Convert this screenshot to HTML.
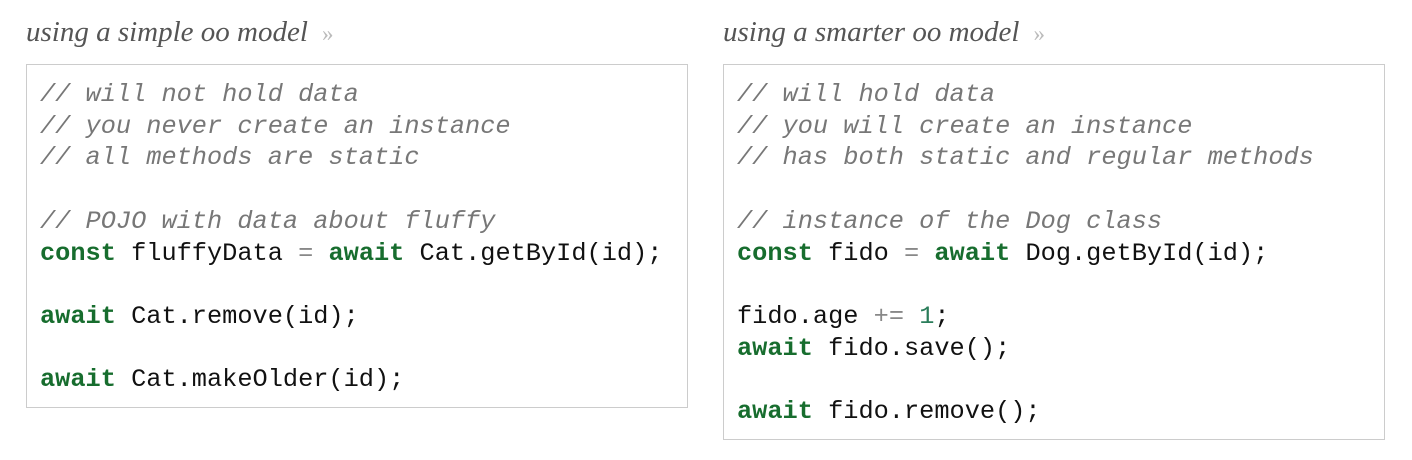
<!DOCTYPE html>
<html><head><style>
body{margin:0;background:#fff;width:1412px;height:460px;position:relative;overflow:hidden}
.t{position:absolute;top:16px;font-family:"Liberation Serif",serif;font-style:italic;font-size:29px;color:#555;white-space:nowrap}
.t span{color:#bbb;font-style:normal;font-size:23px;margin-left:14px}
.b{position:absolute;top:64px;width:662px;border:1px solid #ccc;box-sizing:border-box;padding:14px 0 0 13px;font-family:"Liberation Mono",monospace;font-size:25.3px;line-height:31.7px;color:#111;white-space:pre}
.c{color:#777;font-style:italic}
.k{color:#176d2e;font-weight:bold}
.n{color:#2a7d5a}.o{color:#888}
</style></head><body>
<div class="t" style="left:26px">using a simple oo model<span>»</span></div>
<div class="t" style="left:723px">using a smarter oo model<span>»</span></div>
<div class="b" style="left:26px;height:344px"><span class="c">// will not hold data
// you never create an instance
// all methods are static</span>

<span class="c">// POJO with data about fluffy</span>
<span class="k">const</span> fluffyData <span class="o">=</span> <span class="k">await</span> Cat.getById(id);

<span class="k">await</span> Cat.remove(id);

<span class="k">await</span> Cat.makeOlder(id);</div>
<div class="b" style="left:723px;height:376px"><span class="c">// will hold data
// you will create an instance
// has both static and regular methods</span>

<span class="c">// instance of the Dog class</span>
<span class="k">const</span> fido <span class="o">=</span> <span class="k">await</span> Dog.getById(id);

fido.age <span class="o">+=</span> <span class="n">1</span>;
<span class="k">await</span> fido.save();

<span class="k">await</span> fido.remove();</div>
</body></html>
